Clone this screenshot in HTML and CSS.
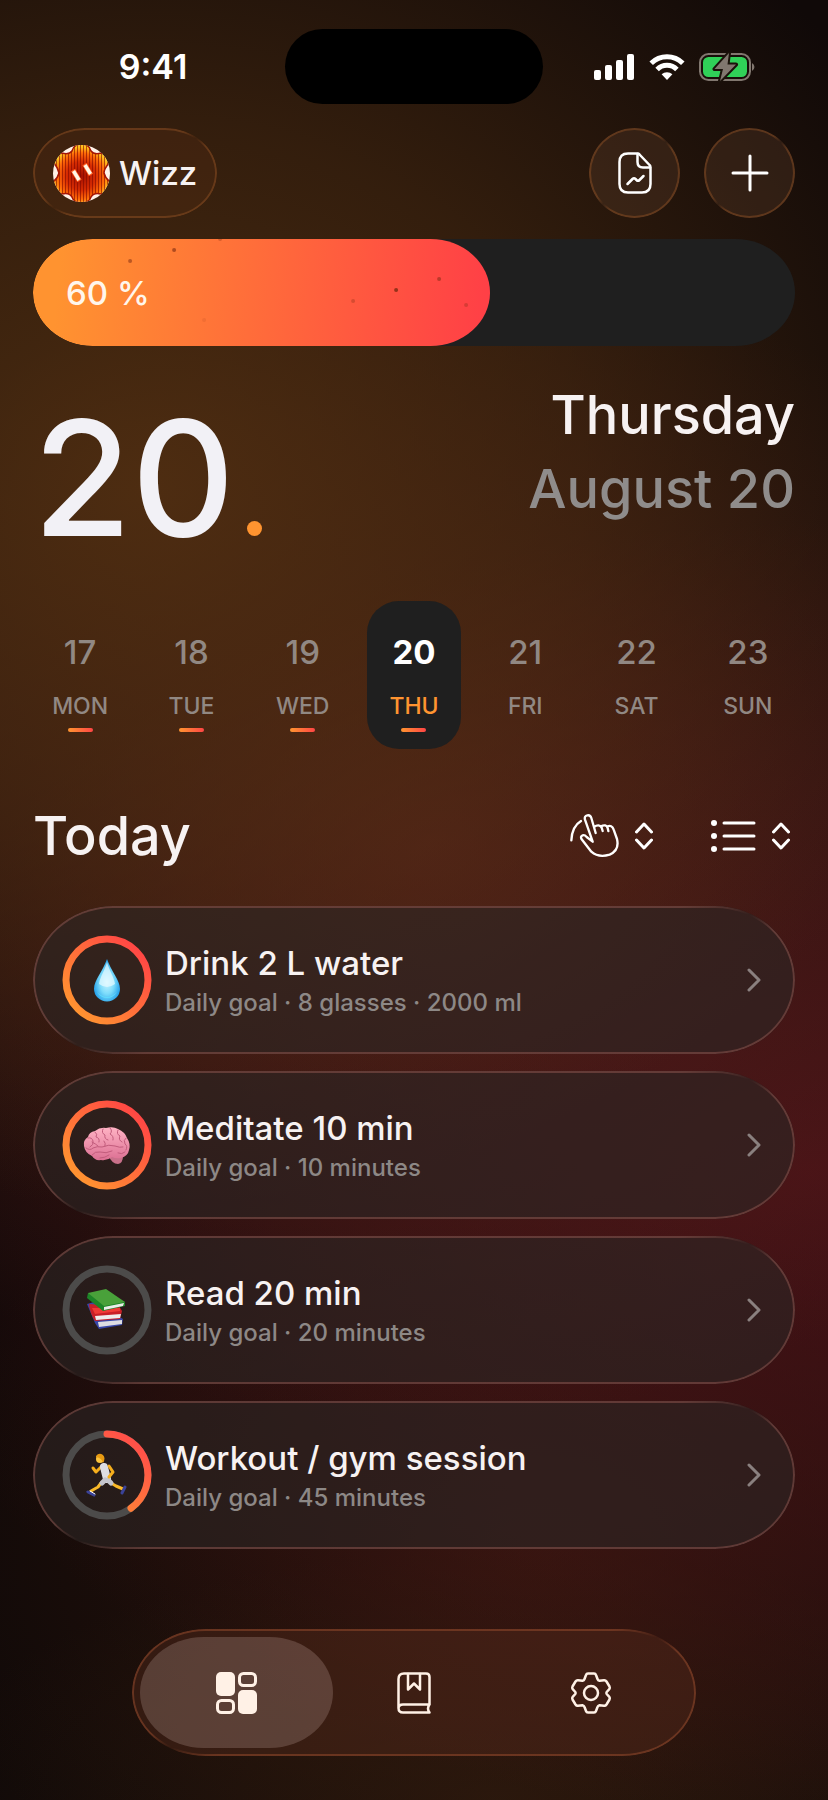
FILE: index.html
```html
<!DOCTYPE html>
<html lang="en">
<head>
  <meta charset="UTF-8">
  <meta name="viewport" content="width=device-width, initial-scale=1.0">
  <title>Habits</title>
  <link rel="stylesheet" href="styles.css">
</head>
<body>
  <!-- Gradients shared by the rings -->
  <svg class="defs" aria-hidden="true">
    <defs>
      <linearGradient id="ringGradient" x1="0" y1="1" x2="1" y2="0">
        <stop offset="0.1" stop-color="#ff9530"/>
        <stop offset="0.9" stop-color="#ff4545"/>
      </linearGradient>
      <linearGradient id="arcGradient" gradientUnits="userSpaceOnUse" x1="20" y1="80" x2="72" y2="14">
        <stop offset="0" stop-color="#ff9530"/>
        <stop offset="1" stop-color="#ff5148"/>
      </linearGradient>
    </defs>
  </svg>

  <!-- Status bar -->
  <div class="status-bar">
    <span class="time">9:41</span>
    <span class="island"></span>
    <span class="status-icons">
      <svg width="41" height="26" viewBox="0 0 41 26" fill="#fff">
        <rect x="0" y="16" width="7" height="10" rx="2"/>
        <rect x="11" y="11" width="7" height="15" rx="2"/>
        <rect x="22" y="6" width="7" height="20" rx="2"/>
        <rect x="33" y="0" width="7" height="26" rx="2"/>
      </svg>
      <svg width="36" height="26" viewBox="0 0 36 26" fill="none" stroke="#fff" stroke-width="5">
        <path d="M2.2 9.2 A22.5 22.5 0 0 1 33.800 9.200"/>
        <path d="M8.100 15.400 A14 14 0 0 1 27.900 15.400"/>
        <path d="M18 26 L12.600 20.300 A7.800 7.800 0 0 1 23.400 20.300 Z" fill="#fff" stroke="none"/>
      </svg>
      <svg width="57" height="30" viewBox="0 0 57 30">
        <rect x="1" y="2" width="50" height="26" rx="8.500" fill="none" stroke="#81776f" stroke-width="2"/>
        <rect x="4" y="5" width="44" height="20" rx="5.500" fill="#30d158"/>
        <path d="M53 11 a4.500 4.500 0 0 1 0 8 Z" fill="#81776f"/>
        <path d="M30 1 L15.500 17 H24 L21 29 L37 12.500 H28.500 Z" fill="#81776f" stroke="#1b120b" stroke-width="4" stroke-linejoin="round" paint-order="stroke"/>
      </svg>
    </span>
  </div>

  <div class="screen">
    <!-- Header -->
    <header class="header">
      <button class="profile glass">
        <svg class="avatar" viewBox="0 0 57 57" aria-hidden="true">
          <defs>
            <clipPath id="avatarClip"><circle cx="28.500" cy="28.500" r="28.500"/></clipPath>
            <radialGradient id="avatarFill" gradientUnits="userSpaceOnUse" cx="28" cy="31" r="29">
              <stop offset="0" stop-color="#a30f02"/>
              <stop offset="0.500" stop-color="#d62c02"/>
              <stop offset="0.800" stop-color="#ff6a08"/>
              <stop offset="1" stop-color="#ffc21c"/>
            </radialGradient>
            <pattern id="avatarStripes" width="3" height="57" patternUnits="userSpaceOnUse">
              <rect width="1" height="57" fill="#7c0600" opacity="0.600"/>
            </pattern>
            <path id="flower" d="M19 6 Q21 -1 28.500 -1 Q36 -1 38 6 Q41 10 48 8 Q56 10 56 18 Q51 24 51 28 Q52 33 58 38 Q56 48 48 49 Q41 47 38 52 Q36 58 28.500 58 Q21 58 19 52 Q16 47 9 49 Q1 47 -1 38 Q5 33 6 28 Q5 23 1 18 Q1 10 9 8 Q16 10 19 6 Z"/>
          </defs>
          <g clip-path="url(#avatarClip)">
            <rect width="57" height="57" fill="#fff2e8"/>
            <use href="#flower" fill="url(#avatarFill)"/>
            <use href="#flower" fill="url(#avatarStripes)" stroke="#a51505" stroke-width="1.500"/>
            <g stroke="#ff5a1c" stroke-width="5"><path d="M20 25 L26.500 36"/><path d="M31.500 19 L38 30"/></g>
            <g stroke="#fff8e8" stroke-width="3.500"><path d="M20.500 26 L26 35"/><path d="M32 20 L37.500 29"/></g>
          </g>
        </svg>
        <span>Wizz</span>
      </button>
      <div class="actions">
        <button class="round-button glass" aria-label="Report">
          <svg width="34" height="42" viewBox="0 0 34 42" fill="none" stroke="#fff" stroke-width="2.500" stroke-linecap="round" stroke-linejoin="round">
            <path d="M20 1.500 H10 Q1.500 1.500 1.500 10 V32 Q1.500 40.500 10 40.500 H24 Q32.500 40.500 32.500 32 V15.500 Q32.500 14 31.500 13 L21.500 2.500 Q20.500 1.500 20 1.500"/>
            <path d="M19.500 2 V10 Q19.500 15.500 25 15.500 H32"/>
            <path d="M9.500 32 L14.500 27 Q16 25.500 17.500 27 L18.500 28 Q20 29.500 21.500 28 L25.500 24"/>
          </svg>
        </button>
        <button class="round-button glass" aria-label="Add habit">
          <svg width="38" height="38" viewBox="0 0 38 38" fill="none" stroke="#fff" stroke-width="3" stroke-linecap="round">
            <path d="M19 2 V36 M2 19 H36"/>
          </svg>
        </button>
      </div>
    </header>

    <!-- Daily progress -->
    <div class="progress" role="progressbar" aria-label="Daily progress" aria-valuenow="60" aria-valuemin="0" aria-valuemax="100">
      <div class="progress-fill" style="width: 60%">
        <svg class="sparks" viewBox="0 0 457 107" fill="#7a2a10">
          <circle cx="97" cy="22" r="2" opacity="0.500"/>
          <circle cx="141" cy="11" r="2" opacity="0.600"/>
          <circle cx="187" cy="0" r="2" opacity="0.300"/>
          <circle cx="171" cy="81" r="2" opacity="0.100"/>
          <circle cx="320" cy="62" r="2" opacity="0.300"/>
          <circle cx="363" cy="51" r="2" opacity="0.800"/>
          <circle cx="406" cy="40" r="2" opacity="0.500"/>
          <circle cx="433" cy="66" r="2" opacity="0.300"/>
        </svg>
        <span class="progress-text">60 %</span>
      </div>
    </div>

    <!-- Current date -->
    <section class="date">
      <div class="date-number">20<span class="date-dot"></span></div>
      <div class="date-text">
        <div class="weekday">Thursday</div>
        <div class="month">August 20</div>
      </div>
    </section>

    <!-- Week strip -->
    <div class="week">
      <button class="day done"><span class="day-number">17</span><span class="day-name">MON</span></button>
      <button class="day done"><span class="day-number">18</span><span class="day-name">TUE</span></button>
      <button class="day done"><span class="day-number">19</span><span class="day-name">WED</span></button>
      <button class="day done active"><span class="day-number">20</span><span class="day-name">THU</span></button>
      <button class="day"><span class="day-number">21</span><span class="day-name">FRI</span></button>
      <button class="day"><span class="day-number">22</span><span class="day-name">SAT</span></button>
      <button class="day"><span class="day-number">23</span><span class="day-name">SUN</span></button>
    </div>

    <!-- Section title and list controls -->
    <div class="list-header">
      <h1>Today</h1>
      <div class="controls">
        <button class="control" aria-label="Swipe mode">
          <svg width="50" height="46" viewBox="86 68 150 138" fill="none" stroke="#fff" stroke-width="7" stroke-linecap="round" stroke-linejoin="round">
            <path d="M93 150 Q95 108 122 92"/>
            <path d="M157 154 L134 88 Q131 77 141 75 Q150 73 153 83 L166 128 M161 110 Q176 99 184 112 L187 122 M182 108 Q197 100 202 113 L204 122 M200 109 Q215 102 220 118 L230 146 Q238 180 208 193 Q174 203 153 184 L124 147 Q119 138 127 135 Q133 133 139 140 L157 154"/>
          </svg>
          <svg width="18" height="28" viewBox="0 0 18 28" fill="none" stroke="#fff" stroke-width="3" stroke-linecap="round" stroke-linejoin="round">
            <path d="M1.500 10 L9 2 L16.500 10 M1.500 18 L9 26 L16.500 18"/>
          </svg>
        </button>
        <button class="control" aria-label="List view">
          <svg width="45" height="34" viewBox="0 0 45 34" fill="#fff">
            <circle cx="3" cy="4" r="3"/><circle cx="3" cy="17" r="3"/><circle cx="3" cy="30" r="3"/>
            <path d="M13 4 H43 M13 17 H43 M13 30 H43" stroke="#fff" stroke-width="3" stroke-linecap="round"/>
          </svg>
          <svg width="18" height="28" viewBox="0 0 18 28" fill="none" stroke="#fff" stroke-width="3" stroke-linecap="round" stroke-linejoin="round">
            <path d="M1.500 10 L9 2 L16.500 10 M1.500 18 L9 26 L16.500 18"/>
          </svg>
        </button>
      </div>
    </div>

    <!-- Habits -->
    <div class="habits">
      <a class="habit glass" href="#water">
        <svg class="ring" viewBox="0 0 90 90" aria-hidden="true">
          <defs>
            <radialGradient id="drop" cx="0.500" cy="0.550" r="0.600">
              <stop offset="0" stop-color="#c9f3ff"/>
              <stop offset="0.450" stop-color="#7ddcfb"/>
              <stop offset="1" stop-color="#0c8fe4"/>
            </radialGradient>
          </defs>
          <circle cx="45" cy="45" r="41" fill="none" stroke="url(#ringGradient)" stroke-width="7"/>
          <path d="M45 24 C41 36 32 45 32 54 A13 12.500 0 0 0 58 54 C58 45 49 36 45 24 Z" fill="url(#drop)"/>
          <path d="M45 27 C43 35 38 42 37 49 Q45 55 53 49 C52 42 47 35 45 27 Z" fill="#e9fbff" opacity="0.700"/>
          <path d="M35 57 Q45 67 55 57 Q51 63 45 63 Q39 63 35 57 Z" fill="#5fe0ff" opacity="0.800"/>
        </svg>
        <span class="habit-text">
          <span class="habit-title">Drink 2 L water</span>
          <span class="habit-goal">Daily goal · 8 glasses · 2000 ml</span>
        </span>
        <svg class="chevron" viewBox="0 0 14 24"><path d="M2 2 L12 12 L2 22"/></svg>
      </a>

      <a class="habit glass" href="#meditate">
        <svg class="ring" viewBox="0 0 90 90" aria-hidden="true">
          <defs>
            <linearGradient id="brain" x1="0" y1="0" x2="0" y2="1">
              <stop offset="0" stop-color="#ffb3c4"/>
              <stop offset="1" stop-color="#dc7093"/>
            </linearGradient>
          </defs>
          <circle cx="45" cy="45" r="41" fill="none" stroke="url(#ringGradient)" stroke-width="7"/>
          <path d="M46 55 Q50 64 56 64 Q61 63 61 56 Z" fill="#c9708a"/>
          <path d="M33 31 Q38 27 44 28 Q51 26 56 29 Q63 32 65 38 Q69 44 67 50 Q66 56 59 58 Q54 59 50 57 Q45 61 39 60 Q33 61 30 56 Q23 53 22 46 Q21 40 26 37 Q27 32 33 31 Z" fill="url(#brain)"/>
          <g fill="none" stroke="#c25c7c" stroke-width="1" stroke-linecap="round">
            <path d="M26 38 Q30 37 31 41 Q32 45 28 47 M33 32 Q36 34 34 37 Q38 38 37 42 M41 29 Q39 33 43 35 Q42 39 46 40 M48 28 Q51 31 48 34 Q52 36 51 40"/>
            <path d="M56 30 Q54 34 58 36 Q56 40 60 42 M64 38 Q61 40 63 44 Q66 46 64 50 M24 48 Q28 51 31 48 Q35 46 40 47 Q47 44 53 46 Q58 48 61 47"/>
            <path d="M30 55 Q33 51 38 52 Q44 54 50 51 M56 53 Q60 55 63 52 M38 58 Q43 58 47 55 M30 42 Q34 44 36 46 M42 41 Q44 43 43 46"/>
          </g>
        </svg>
        <span class="habit-text">
          <span class="habit-title">Meditate 10 min</span>
          <span class="habit-goal">Daily goal · 10 minutes</span>
        </span>
        <svg class="chevron" viewBox="0 0 14 24"><path d="M2 2 L12 12 L2 22"/></svg>
      </a>

      <a class="habit glass" href="#read">
        <svg class="ring" viewBox="0 0 90 90" aria-hidden="true">
          <circle cx="45" cy="45" r="41" fill="none" stroke="#4c4b4a" stroke-width="7"/>
          <path d="M25 39 L32 37 L61 54 L60 60 L37 64 L33 58 Z" fill="#3746a8"/>
          <path d="M36 57 L60 55 L60 59 L37 62 Z" fill="#dddde2"/>
          <path d="M27 39 L57 41 L60 46 L58 54 L33 56 Q28 49 27 39 Z" fill="#c91f27"/>
          <path d="M33 51 L59 49 L58 53 L34 55 Z" fill="#efecec"/>
          <path d="M30 43 L58 43 L58 46 L33 49 Z" fill="#f03a36"/>
          <path d="M26 28 L25 33 L41 46 L63 41 L63 37 Z" fill="#1d8427"/>
          <path d="M42 42 L62 38 L61 41 L42 45 Z" fill="#eceeea"/>
          <path d="M26 28 L44 24 L63 37 L42 41 Z" fill="#49a13a"/>
        </svg>
        <span class="habit-text">
          <span class="habit-title">Read 20 min</span>
          <span class="habit-goal">Daily goal · 20 minutes</span>
        </span>
        <svg class="chevron" viewBox="0 0 14 24"><path d="M2 2 L12 12 L2 22"/></svg>
      </a>

      <a class="habit glass" href="#workout">
        <svg class="ring" viewBox="0 0 90 90" aria-hidden="true">
          <circle cx="45" cy="45" r="41" fill="none" stroke="#4c4b4a" stroke-width="7"/>
          <path d="M45 4 A41 41 0 0 1 69 78.200" fill="none" stroke="url(#arcGradient)" stroke-width="7" stroke-linecap="round"/>
          <g fill="none" stroke-linecap="round" stroke-linejoin="round">
            <path d="M39 37 L34 42 L31 38" stroke="#f5ae1c" stroke-width="3"/>
            <path d="M39 53 L36 57 L29 61" stroke="#f9b928" stroke-width="3"/>
            <path d="M49 53 L54 56 L61 59" stroke="#f9b928" stroke-width="3"/>
            <path d="M42 37 L45 49" stroke="#dedee3" stroke-width="8"/>
            <path d="M43 50 L40 53 M46 50 L49 53" stroke="#c3c4cc" stroke-width="5"/>
            <path d="M47 36 L51 42 L47 47" stroke="#f5ae1c" stroke-width="3"/>
            <path d="M26 62 L32 65" stroke="#3a4298" stroke-width="3"/>
            <path d="M28 61 L33 64" stroke="#fff" stroke-width="1"/>
            <path d="M60 63 L63 57" stroke="#3a4298" stroke-width="3"/>
          </g>
          <circle cx="38" cy="29" r="4" fill="#fcc43c"/>
          <path d="M34 26 Q37 22 41 25 Q44 28 41 33 Q40 28 34 27 Z" fill="#e79a12"/>
        </svg>
        <span class="habit-text">
          <span class="habit-title">Workout / gym session</span>
          <span class="habit-goal">Daily goal · 45 minutes</span>
        </span>
        <svg class="chevron" viewBox="0 0 14 24"><path d="M2 2 L12 12 L2 22"/></svg>
      </a>
    </div>

    <!-- Tab bar -->
    <nav class="tab-bar glass">
      <a class="tab active" href="#home" aria-label="Home">
        <svg width="42" height="42" viewBox="0 0 42 42" fill="#fff1e6">
          <rect x="0" y="0" width="19" height="24" rx="5"/>
          <rect x="22" y="18" width="19" height="24" rx="5"/>
          <rect x="23.500" y="1.500" width="16" height="12" rx="4" fill="none" stroke="#fff1e6" stroke-width="3"/>
          <rect x="1.500" y="28.500" width="16" height="12" rx="4" fill="none" stroke="#fff1e6" stroke-width="3"/>
        </svg>
      </a>
      <a class="tab" href="#journal" aria-label="Journal">
        <svg width="34" height="42" viewBox="0 0 34 42" fill="none" stroke="#fff1e6" stroke-width="2.500" stroke-linecap="round" stroke-linejoin="round">
          <path d="M32.500 32.500 V5 Q32.500 1.500 29 1.500 H7 Q1.500 1.500 1.500 7 V36 Q1.500 40.500 6 40.500 H32.500 Q29.500 36.500 32.500 32.500 H6 Q1.500 32.500 1.500 36.500"/>
          <path d="M11 2 V17.500 L17 11.500 L23 17.500 V2"/>
        </svg>
      </a>
      <a class="tab" href="#settings" aria-label="Settings">
        <svg width="42" height="42" viewBox="0 0 42 42" fill="none" stroke="#fff1e6" stroke-width="2.500" stroke-linejoin="round">
          <path d="M18 1.500 H24 Q25.500 1.500 26 3 L27.500 7 Q28 8.500 29.500 8.800 L34 8.200 Q35.500 8 36.500 9.500 L39.500 14.500 Q40.300 16 39.300 17.200 L36.700 20 Q36 21 36.700 22 L39.300 24.800 Q40.300 26 39.500 27.500 L36.500 32.500 Q35.500 34 34 33.800 L29.500 33.200 Q28 33.500 27.500 35 L26 39 Q25.500 40.500 24 40.500 H18 Q16.500 40.500 16 39 L14.500 35 Q14 33.500 12.500 33.200 L8 33.800 Q6.500 34 5.500 32.500 L2.500 27.500 Q1.700 26 2.700 24.800 L5.300 22 Q6 21 5.300 20 L2.700 17.200 Q1.700 16 2.500 14.500 L5.500 9.500 Q6.500 8 8 8.200 L12.500 8.800 Q14 8.500 14.500 7 L16 3 Q16.500 1.500 18 1.500 Z"/>
          <circle cx="21" cy="21" r="7"/>
        </svg>
      </a>
    </nav>
  </div>
</body>
</html>
```
FILE: styles.css
```css
* {
  box-sizing: border-box;
}

body {
  font-family: Inter, "Liberation Sans", sans-serif;
  margin: 0;
  min-height: 100vh;
  color: #f7f2f2;
  background:
    radial-gradient(ellipse 105% 40% at 18% 27%, rgba(86, 50, 18, 0.85), rgba(86, 50, 18, 0.5) 50%, rgba(86, 50, 18, 0) 100%),
    radial-gradient(ellipse 90% 32% at 52% 47%, rgba(92, 36, 28, 0.7), rgba(92, 36, 28, 0) 100%),
    radial-gradient(ellipse 115% 36% at 98% 65%, rgba(80, 19, 25, 0.85), rgba(80, 19, 25, 0) 100%),
    radial-gradient(ellipse 75% 26% at 65% 86%, rgba(62, 28, 15, 0.65), rgba(62, 28, 15, 0) 100%),
    radial-gradient(ellipse 70% 14% at 60% 100%, rgba(46, 30, 14, 0.6), rgba(46, 30, 14, 0) 100%),
    #100908;
}

button {
  font-family: inherit;
  color: inherit;
  border: none;
  background: none;
  padding: 0;
  cursor: pointer;
}

a {
  color: inherit;
  text-decoration: none;
}

svg {
  display: block;
  flex-shrink: 0;
}

.defs {
  position: absolute;
  width: 0;
  height: 0;
}

/* Status bar */
.status-bar {
  display: grid;
  grid-template-columns: 1fr 258px 1fr;
  align-items: center;
  justify-items: center;
  padding: 29px 21px 24px;
}

.time {
  font-size: 34px;
  font-weight: 600;
  color: #fff;
}

.island {
  width: 100%;
  height: 75px;
  border-radius: 38px;
  background-color: #000;
}

.status-icons {
  display: flex;
  align-items: center;
  gap: 14px;
}

.screen {
  padding: 0 33px 43px;
}

/* Translucent surface with a rim that fades in two corners */
.glass {
  --rim: rgba(160, 90, 40, 0.5);
  position: relative;
  background-color: rgba(90, 48, 20, 0.3);
}

.glass::before {
  content: "";
  position: absolute;
  inset: 0;
  border-radius: inherit;
  padding: 2px;
  background: linear-gradient(to bottom right, var(--rim) 43%, transparent 50%, var(--rim) 57%);
  mask: linear-gradient(#000 0 0) content-box exclude, linear-gradient(#000 0 0);
  opacity: 0.8;
  pointer-events: none;
}

/* Header */
.header {
  display: flex;
  justify-content: space-between;
  align-items: center;
  margin-bottom: 21px;
}

.profile {
  display: flex;
  align-items: center;
  gap: 9px;
  height: 90px;
  padding: 0 20px;
  border-radius: 52px / 45px;
  font-size: 33px;
  font-weight: 500;
}

.avatar {
  width: 57px;
  height: 57px;
}

.actions {
  display: flex;
  gap: 24px;
}

.round-button {
  display: flex;
  align-items: center;
  justify-content: center;
  width: 91px;
  height: 90px;
  border-radius: 50%;
  background-color: rgba(100, 65, 45, 0.3);
}

/* Progress bar */
.progress {
  height: 107px;
  border-radius: 60px / 54px;
  background-color: #1f1f1f;
  overflow: hidden;
}

.progress-fill {
  position: relative;
  display: flex;
  align-items: center;
  height: 100%;
  padding-left: 33px;
  border-radius: 60px / 54px;
  background: linear-gradient(95deg, #ff9330 6%, #ff4046 98%);
  overflow: hidden;
}

.sparks {
  position: absolute;
  inset: 0;
  width: 100%;
  height: 100%;
}

.progress-text {
  font-size: 33px;
  font-weight: 500;
  color: #fff6ec;
}

/* Date */
.date {
  display: flex;
  justify-content: space-between;
  align-items: flex-start;
  padding-top: 32px;
  height: 255px;
}

.date-number {
  display: flex;
  align-items: baseline;
  gap: 12px;
  font-size: 160px;
  font-weight: 500;
  line-height: 200px;
  color: #f2f1f6;
}

.date-dot {
  width: 15px;
  height: 15px;
  border-radius: 50%;
  background-color: #ff9430;
}

.date-text {
  text-align: right;
  font-size: 54px;
  font-weight: 500;
  line-height: 74px;
}

.month {
  color: #8f8c8b;
}

/* Week strip */
.week {
  display: grid;
  grid-template-columns: repeat(7, 1fr);
  gap: 17px;
}

.day {
  display: flex;
  flex-direction: column;
  align-items: center;
  height: 148px;
  padding-top: 30px;
  border-radius: 32px;
  color: #918883;
}

.day-number {
  font-size: 33px;
  font-weight: 500;
  line-height: 42px;
}

.day-name {
  font-size: 23px;
  font-weight: 500;
  line-height: 28px;
  margin-top: 19px;
}

.day.done::after {
  content: "";
  width: 25px;
  height: 4px;
  margin-top: 8px;
  border-radius: 2px;
  background: linear-gradient(to right, #ff9530, #ff4545);
}

.day.active {
  background-color: #1f1f1f;
}

.day.active .day-number {
  font-weight: 700;
  color: #fff;
}

.day.active .day-name {
  color: #ff9430;
}

/* List header */
.list-header {
  display: flex;
  justify-content: space-between;
  align-items: center;
  padding: 50px 5px 33px 0;
}

h1 {
  margin: 0;
  font-size: 54px;
  font-weight: 500;
  line-height: 74px;
}

.controls {
  display: flex;
  gap: 58px;
}

.control {
  display: flex;
  align-items: center;
  gap: 16px;
}

/* Habit cards */
.habits {
  display: flex;
  flex-direction: column;
  gap: 17px;
}

.habit {
  --rim: rgba(160, 95, 88, 0.55);
  display: flex;
  align-items: center;
  gap: 13px;
  height: 148px;
  padding: 0 34px 0 29px;
  border-radius: 80px / 74px;
  background-color: rgba(44, 37, 36, 0.62);
}

.ring {
  width: 90px;
  height: 90px;
}

.habit-text {
  display: flex;
  flex: 1;
  flex-direction: column;
}

.habit-title {
  font-size: 33px;
  font-weight: 500;
  line-height: 46px;
}

.habit-goal {
  font-size: 24px;
  font-weight: 500;
  line-height: 34px;
  color: #8d8886;
}

.chevron {
  width: 14px;
  height: 24px;
  fill: none;
  stroke: #8a807f;
  stroke-width: 3;
  stroke-linecap: round;
  stroke-linejoin: round;
}

/* Tab bar */
.tab-bar {
  --rim: rgba(150, 75, 45, 0.65);
  display: grid;
  grid-template-columns: repeat(3, 1fr);
  width: 74%;
  height: 127px;
  margin: 80px auto 0;
  padding: 8px 16px;
  border-radius: 74px / 64px;
  background-color: rgba(85, 42, 28, 0.42);
}

.tab {
  display: flex;
  align-items: center;
  justify-content: center;
}

.tab.active {
  margin: 0 -8px;
  border-radius: 64px / 56px;
  background-color: rgba(255, 230, 220, 0.18);
}
```
